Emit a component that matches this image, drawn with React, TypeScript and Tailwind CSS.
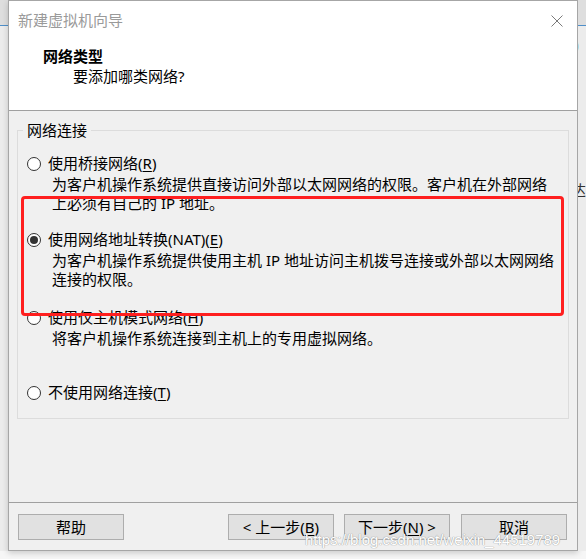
import React from "react";

const ui = "font-['Noto_Sans','Noto_Sans_CJK_SC',sans-serif] text-[15px] leading-[19px] text-black";

function Radio({ checked = false }: { checked?: boolean }) {
  return (
    <span className="w-[14px] h-[14px] rounded-full border border-[#333333] bg-white flex items-center justify-center shrink-0">
      {checked && <span className="w-[8px] h-[8px] rounded-full bg-[#333333]" />}
    </span>
  );
}

function Option({
  label,
  keyChar,
  checked,
  lines,
  className,
}: {
  label: string;
  keyChar: string;
  checked?: boolean;
  lines?: string[];
  className?: string;
}) {
  return (
    <div className={className}>
      <div className="flex items-center">
        <Radio checked={checked} />
        <span className="ml-[7px] whitespace-nowrap">
          {label}(<span className="underline underline-offset-2">{keyChar}</span>)
        </span>
      </div>
      {lines && (
        <div className="ml-[25px] mt-[2px]">
          {lines.map((l) => (
            <div key={l} className="whitespace-nowrap">
              {l}
            </div>
          ))}
        </div>
      )}
    </div>
  );
}

function Btn({ children }: { children: React.ReactNode }) {
  return (
    <button className="w-[106px] h-[26px] bg-[#e1e1e1] border border-[#adadad] flex items-center justify-center whitespace-nowrap">
      {children}
    </button>
  );
}

export default function App() {
  return (
    <div className={`relative w-[586px] h-[559px] overflow-hidden bg-[#f6f6f6] ${ui}`}>
      <div className="flex">
        {/* background window, left */}
        <div className="w-[8px] h-[551px] flex flex-col bg-[#ececec]">
          <div className="h-[25px] bg-[#dedede]" />
          <div className="h-px bg-[#4f8fc9]" />
        </div>

        {/* dialog */}
        <div className="w-[570px] h-[551px] border border-[#a6a6a6] bg-[#f0f0f0] flex flex-col shadow-[0_2px_6px_rgba(0,0,0,0.18)]">
          <div className="h-[110px] bg-white border-b border-[#a0a0a0]">
            <div className="flex items-center justify-between pt-[10px] pl-[9px] pr-[14px]">
              <span className="text-[#9a9a9a]">新建虚拟机向导</span>
              <svg width="12" height="12" viewBox="0 0 12 12">
                <path d="M0.5 0.5 L11.5 11.5 M11.5 0.5 L0.5 11.5" stroke="#7a7a7a" strokeWidth="1" fill="none" />
              </svg>
            </div>
            <div className="pl-[34px] mt-[17px] font-bold">网络类型</div>
            <div className="pl-[64px] mt-[1px]">要添加哪类网络?</div>
          </div>

          <div className="flex-1 flex flex-col">
            <div className="mt-[19px] mx-[8px] h-[289px] border border-[#dcdcdc]">
              <div className="-mt-[10px] ml-[5px] px-[4px] w-fit bg-[#f0f0f0]">网络连接</div>
              <div className="pl-[9px]">
                <Option
                  className="mt-[14px]"
                  label="使用桥接网络"
                  keyChar="R"
                  lines={[
                    "为客户机操作系统提供直接访问外部以太网网络的权限。客户机在外部网络",
                    "上必须有自己的 IP 地址。",
                  ]}
                />
                <Option
                  className="mt-[17px]"
                  label="使用网络地址转换(NAT)"
                  keyChar="E"
                  checked
                  lines={[
                    "为客户机操作系统提供使用主机 IP 地址访问主机拨号连接或外部以太网网络",
                    "连接的权限。",
                  ]}
                />
                <Option
                  className="mt-[19px]"
                  label="使用仅主机模式网络"
                  keyChar="H"
                  lines={["将客户机操作系统连接到主机上的专用虚拟网络。"]}
                />
                <Option className="mt-[35px]" label="不使用网络连接" keyChar="T" />
              </div>
            </div>

            <div className="mt-[83px] border-t border-[#a0a0a0]" />

            <div className="mt-[11px] flex pl-[9px] pr-[10px]">
              <Btn>帮助</Btn>
              <div className="ml-auto flex gap-[10px]">
                <Btn>
                  &lt; 上一步(<span className="underline underline-offset-2">B</span>)
                </Btn>
                <Btn>
                  下一步(<span className="underline underline-offset-2">N</span>) &gt;
                </Btn>
              </div>
              <div className="ml-[11px]">
                <Btn>取消</Btn>
              </div>
            </div>
          </div>
        </div>

        {/* background window, right */}
        <div className="w-[8px] h-[551px] flex flex-col bg-[#ececec] overflow-hidden">
          <div className="h-[25px] bg-[#dedede]" />
          <div className="h-px bg-[#4f8fc9]" />
          <div className="mt-[8px] -ml-[6px] text-[#1f4e8c] font-bold text-[20px] leading-[22px]">)</div>
          <div className="mt-[125px] -ml-[7px] text-[#333]">达</div>
        </div>
      </div>

      {/* annotation overlay */}
      <div className="absolute left-[21px] top-[196px] w-[543px] h-[120px] border-[3px] border-[#ff1f1f] rounded-[4px]" />

      {/* watermark */}
      <div className="absolute left-[305px] top-[531px] font-['Liberation_Sans',sans-serif] text-[15px] leading-[18px] text-white whitespace-nowrap [text-shadow:0_0_1px_#9a9a9a,0_0_1px_#9a9a9a]">
        https://blog.csdn.net/weixin_44519789
      </div>
    </div>
  );
}
